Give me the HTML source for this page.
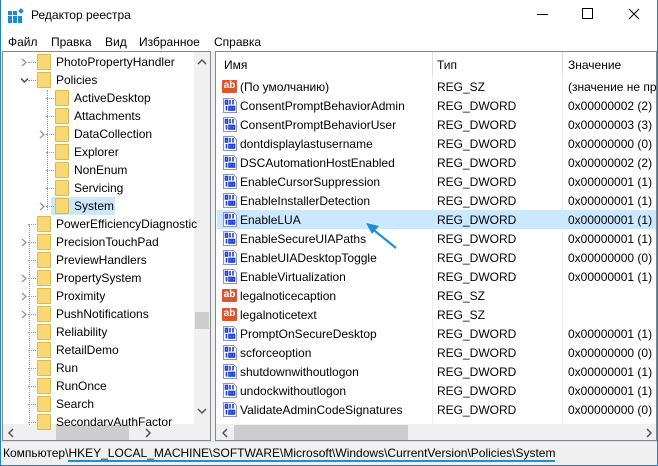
<!DOCTYPE html>
<html><head><meta charset="utf-8"><style>
*{margin:0;padding:0;box-sizing:border-box}
body{width:658px;height:466px;overflow:hidden;background:#f0f0f0;font-family:"Liberation Sans",sans-serif;font-size:12px;color:#000;position:relative}
.a{position:absolute;white-space:nowrap}
.fold{position:absolute;width:14px;height:16px;background:#f8d775;border:1px solid #e0b84a;border-radius:1px}
.exp{position:absolute}
.dot{position:absolute;border-top:1px dotted #999;width:8px}
.ic{position:absolute}
.ab{position:absolute;width:15px;height:13px;font-size:10px;line-height:11px;font-weight:bold;color:#fff;background:#e0532e;text-align:center;border-radius:1px}
</style></head><body>
<div class="a" style="left:0;top:0;width:658px;height:466px;border:1px solid #1883d7;border-top:0"></div>
<div class="a" style="top:0;left:1px;width:656px;height:32px;background:#fff"></div>
<svg class="a" style="left:8px;top:8px" width="16" height="16"><g fill="#1a8ad8"><rect x="0" y="3" width="4" height="4"/><rect x="5" y="3" width="4" height="4"/><rect x="0" y="8" width="4" height="4"/><rect x="5" y="8" width="4" height="4"/><rect x="10" y="8" width="4" height="4"/><rect x="0" y="12" width="4" height="3"/><rect x="5" y="12" width="4" height="3"/><rect x="10" y="12" width="4" height="3"/><rect x="11" y="1" width="4" height="4" transform="rotate(45 13 3)"/></g></svg>
<div class="a" style="left:31px;top:8px;font-size:12px">Редактор реестра</div>
<div class="a" style="left:537px;top:14px;width:11px;border-top:1px solid #000"></div>
<div class="a" style="left:582px;top:8px;width:11px;height:11px;border:1px solid #000"></div>
<svg class="a" style="left:628px;top:8px" width="12" height="12"><path d="M1 1L11 11M11 1L1 11" stroke="#000" stroke-width="1.1"/></svg>
<div class="a" style="left:1px;top:32px;width:656px;height:19px;background:#fff"></div>
<div class="a" style="left:8px;top:35px">Файл</div>
<div class="a" style="left:51px;top:35px">Правка</div>
<div class="a" style="left:105px;top:35px">Вид</div>
<div class="a" style="left:139px;top:35px">Избранное</div>
<div class="a" style="left:214px;top:35px">Справка</div>
<div class="a" style="left:2px;top:51px;width:209px;height:390px;background:#fff;border:1px solid #828790"></div>
<div class="a" style="left:194px;top:52px;width:16px;height:372px;background:#f0f0f0"></div>
<div class="a" style="left:195px;top:312px;width:14px;height:17px;background:#cdcdcd"></div>
<svg class="a" style="left:197px;top:58px" width="10" height="8"><path d="M1 6L5 2L9 6" fill="none" stroke="#555" stroke-width="1.5"/></svg>
<svg class="a" style="left:197px;top:407px" width="10" height="8"><path d="M1 2L5 6L9 2" fill="none" stroke="#555" stroke-width="1.5"/></svg>
<div class="a" style="left:3px;top:424px;width:207px;height:16px;background:#f0f0f0"></div>
<div class="a" style="left:56px;top:425px;width:73px;height:15px;background:#cdcdcd"></div>
<svg class="a" style="left:7px;top:428px" width="8" height="10"><path d="M6 1L2 5L6 9" fill="none" stroke="#555" stroke-width="1.5"/></svg>
<svg class="a" style="left:144px;top:428px" width="8" height="10"><path d="M2 1L6 5L2 9" fill="none" stroke="#555" stroke-width="1.5"/></svg>
<div class="a" style="left:51px;top:197px;width:64px;height:18px;background:#cce8ff"></div>
<div id="tree"></div>
<div class="a" style="left:215px;top:51px;width:442px;height:390px;background:#fff;border:1px solid #828790"></div>
<div class="a" style="left:432px;top:52px;height:372px;border-left:1px solid #eee"></div>
<div class="a" style="left:562px;top:52px;height:372px;border-left:1px solid #eee"></div>
<div class="a" style="left:432px;top:52px;height:23px;border-left:1px solid #ddd"></div>
<div class="a" style="left:562px;top:52px;height:23px;border-left:1px solid #ddd"></div>
<div class="a" style="left:224px;top:58px">Имя</div>
<div class="a" style="left:437px;top:58px">Тип</div>
<div class="a" style="left:568px;top:58px">Значение</div>
<div class="a" style="left:217px;top:210px;width:439px;height:19px;background:#cce8ff"></div>
<div id="rows"></div>
<div class="a" style="left:216px;top:424px;width:440px;height:16px;background:#f0f0f0"></div>
<div class="a" style="left:234px;top:425px;width:174px;height:15px;background:#cdcdcd"></div>
<svg class="a" style="left:221px;top:428px" width="8" height="10"><path d="M6 1L2 5L6 9" fill="none" stroke="#555" stroke-width="1.5"/></svg>
<svg class="a" style="left:645px;top:428px" width="8" height="10"><path d="M2 1L6 5L2 9" fill="none" stroke="#555" stroke-width="1.5"/></svg>
<svg class="a" style="left:360px;top:218px" width="45" height="40"><line x1="36" y1="30" x2="10" y2="9" stroke="#1e8fd6" stroke-width="2.2"/><polygon points="6,5 19,8 12,16" fill="#1e8fd6"/></svg>
<div class="a" style="left:1px;top:441px;width:656px;height:24px;background:#f0f0f0;border-top:1px solid #ddd"></div>
<div class="a" style="left:3px;top:446px">Компьютер\<span style="border-bottom:2px solid #1e8fd6">HKEY_LOCAL_MACHINE\SOFTWARE\Microsoft\Windows\CurrentVersion\Policies\System</span></div>
<script>
var t=[["PhotoPropertyHandler",1,">"],["Policies",1,"v"],["ActiveDesktop",2],["Attachments",2],["DataCollection",2,">"],["Explorer",2],["NonEnum",2],["Servicing",2],["System",2,">"],["PowerEfficiencyDiagnostic",1],["PrecisionTouchPad",1,">"],["PreviewHandlers",1],["PropertySystem",1,">"],["Proximity",1,">"],["PushNotifications",1,">"],["Reliability",1],["RetailDemo",1],["Run",1],["RunOnce",1],["Search",1],["SecondaryAuthFactor",1]];
var h="";t.forEach(function(r,i){var y=53+i*18;var fx=r[1]==1?37:55;
h+='<div class="dot" style="left:'+(fx-9)+'px;top:'+(y+9)+'px"></div>';
if(r[2])h+='<svg class="exp" style="left:'+(fx-17)+'px;top:'+(y+5)+'px" width="9" height="9"><path d="'+(r[2]==">"?"M2 1L6 4.5L2 8":"M1 2.5L4.5 6L8 2.5")+'" fill="none" stroke="'+(r[2]==">"?"#999":"#444")+'" stroke-width="1.4"/></svg>';
h+='<div class="fold" style="left:'+fx+'px;top:'+(y+1)+'px"></div><div class="a" style="left:'+(fx+19)+'px;top:'+(y+2)+'px;'+(y>410?'height:11px;overflow:hidden;':'')+'">'+r[0]+'</div>';});
h+='<div class="a" style="left:47px;top:90px;height:120px;border-left:1px dotted #999"></div><div class="a" style="left:29px;top:225px;height:200px;border-left:1px dotted #999"></div>';
document.getElementById("tree").innerHTML=h;
var IC='<path d="M1.5 1.5H11.5L14.5 4.5V15.5H1.5Z" fill="#fff" stroke="#8a96c0"/><g fill="none" stroke="#1f3fd8" stroke-width="1.6"><rect x="3.5" y="3.5" width="2" height="3.5"/><path d="M8 3v4.5M11 3v4.5M4.5 9v4.5"/><rect x="7" y="9.5" width="2" height="3.5"/><rect x="10.5" y="9.5" width="2" height="3.5"/></g>';
var R=[["(По умолчанию)","REG_SZ","(значение не присвоено)",1],["ConsentPromptBehaviorAdmin","REG_DWORD","0x00000002 (2)"],["ConsentPromptBehaviorUser","REG_DWORD","0x00000003 (3)"],["dontdisplaylastusername","REG_DWORD","0x00000000 (0)"],["DSCAutomationHostEnabled","REG_DWORD","0x00000002 (2)"],["EnableCursorSuppression","REG_DWORD","0x00000001 (1)"],["EnableInstallerDetection","REG_DWORD","0x00000001 (1)"],["EnableLUA","REG_DWORD","0x00000001 (1)"],["EnableSecureUIAPaths","REG_DWORD","0x00000001 (1)"],["EnableUIADesktopToggle","REG_DWORD","0x00000000 (0)"],["EnableVirtualization","REG_DWORD","0x00000001 (1)"],["legalnoticecaption","REG_SZ","",1],["legalnoticetext","REG_SZ","",1],["PromptOnSecureDesktop","REG_DWORD","0x00000001 (1)"],["scforceoption","REG_DWORD","0x00000000 (0)"],["shutdownwithoutlogon","REG_DWORD","0x00000001 (1)"],["undockwithoutlogon","REG_DWORD","0x00000001 (1)"],["ValidateAdminCodeSignatures","REG_DWORD","0x00000000 (0)"]];
h="";R.forEach(function(r,i){var y=77+i*19;
h+=r[3]?'<div class="ab" style="left:222px;top:'+(y+3)+'px">ab</div>':'<svg class="ic" style="left:222px;top:'+(y+1)+'px" width="16" height="17">'+IC+'</svg>';
h+='<div class="a" style="left:240px;top:'+(y+3)+'px">'+r[0]+'</div><div class="a" style="left:437px;top:'+(y+3)+'px">'+r[1]+'</div><div class="a" style="left:568px;top:'+(y+3)+'px;width:88px;overflow:hidden">'+r[2]+'</div>';});
document.getElementById("rows").innerHTML=h;
</script>
</body></html>
